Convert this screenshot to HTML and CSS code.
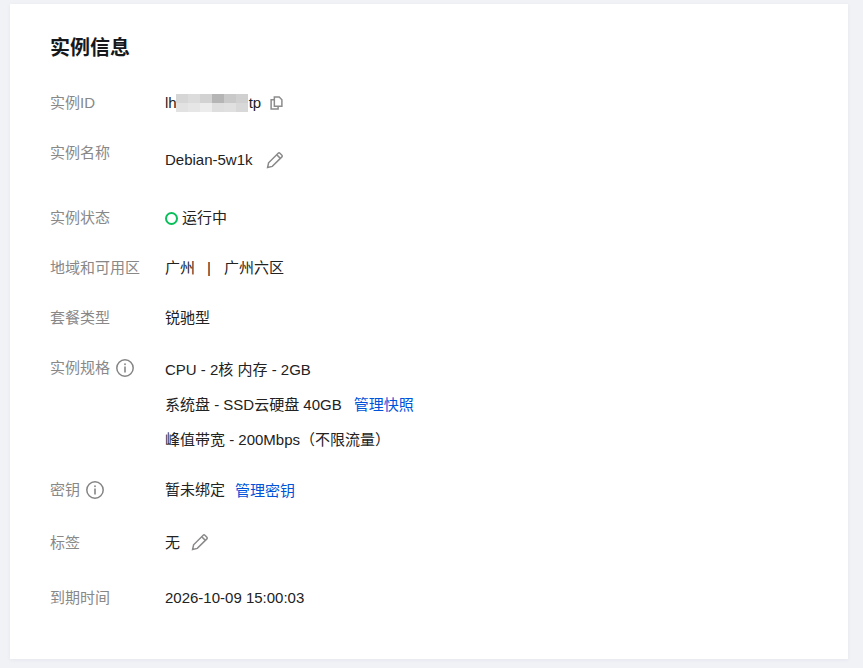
FILE: index.html
```html
<!DOCTYPE html>
<html lang="zh-CN">
<head>
<meta charset="utf-8">
<title>实例信息</title>
<link rel="stylesheet" href="styles.css">
</head>
<body>
<svg class="defs" width="0" height="0" aria-hidden="true">
  <symbol id="pencil" viewBox="0 0 18 18">
    <path d="M1.6 16.4l1-4.6L12.2 2.2a1.2 1.2 0 0 1 1.7 0l2 2a1.2 1.2 0 0 1 0 1.7L6.300 15.400z" fill="none" stroke="currentColor" stroke-width="1.500"/>
    <path d="M10.700 3.700l3.700 3.700" fill="none" stroke="currentColor" stroke-width="1.500"/>
  </symbol>
  <symbol id="info" viewBox="0 0 18 18">
    <circle cx="9" cy="9" r="8.200" fill="none" stroke="currentColor" stroke-width="1.500"/>
    <rect x="8.200" y="7.500" width="1.600" height="6" fill="currentColor"/>
    <rect x="8.200" y="4.400" width="1.600" height="1.700" fill="currentColor"/>
  </symbol>
</svg>
<main class="card">
  <h1 class="title">实例信息</h1>
  <div class="rows">
    <div class="row row-id">
      <div class="label">实例ID</div>
      <div class="value inline">
        <span>lh</span>
        <span class="mosaic" aria-hidden="true">
          <i class="c1"></i><i class="c2"></i><i class="c3"></i><i class="c4"></i><i class="c5"></i><i class="c6"></i>
          <i class="d1"></i><i class="d2"></i><i class="d3"></i><i class="d4"></i><i class="d5"></i><i class="d6"></i>
        </span>
        <span>tp</span>
        <svg class="icon-copy" width="13" height="14" viewBox="0 0 12 13">
          <path d="M4 9.500V1h4.500L11 3.500v6z" fill="none" stroke="currentColor" stroke-width="1.400"/>
          <path d="M4 3.500H1V12h6.500V9.500" fill="none" stroke="currentColor" stroke-width="1.400"/>
        </svg>
      </div>
    </div>
    <div class="row row-name">
      <div class="label">实例名称</div>
      <div class="value name-value inline">
        <span>Debian-5w1k</span>
        <svg class="icon-pencil name-pencil" width="18" height="18"><use href="#pencil"/></svg>
      </div>
    </div>
    <div class="row row-std">
      <div class="label">实例状态</div>
      <div class="value inline"><span class="status-dot"></span><span>运行中</span></div>
    </div>
    <div class="row row-std">
      <div class="label">地域和可用区</div>
      <div class="value inline"><span>广州</span><span class="sep">|</span><span>广州六区</span></div>
    </div>
    <div class="row row-std">
      <div class="label">套餐类型</div>
      <div class="value">锐驰型</div>
    </div>
    <div class="row row-spec">
      <div class="label inline">实例规格<svg class="icon-info" width="18" height="18"><use href="#info"/></svg></div>
      <div class="value lines">
        <div class="line">CPU - 2核 内存 - 2GB</div>
        <div class="line">系统盘 - SSD云硬盘 40GB<a class="link link-snap" href="#">管理快照</a></div>
        <div class="line">峰值带宽 - 200Mbps（不限流量）</div>
      </div>
    </div>
    <div class="row row-key">
      <div class="label inline">密钥<svg class="icon-info" width="18" height="18"><use href="#info"/></svg></div>
      <div class="value">暂未绑定<a class="link link-key" href="#">管理密钥</a></div>
    </div>
    <div class="row row-tag">
      <div class="label">标签</div>
      <div class="value inline"><span>无</span><svg class="icon-pencil tag-pencil" width="18" height="18"><use href="#pencil"/></svg></div>
    </div>
    <div class="row row-std">
      <div class="label">到期时间</div>
      <div class="value">2026-10-09 15:00:03</div>
    </div>
  </div>
</main>
</body>
</html>
```
FILE: styles.css
```css
* { box-sizing: border-box; }
html, body { height: 100%; }
body {
  margin: 0;
  padding: 4px 15px 9px 10px;
  background: #f1f2f6;
  font-family: "Liberation Sans", "Noto Sans CJK SC", sans-serif;
  font-size: 15px;
  line-height: 20px;
  color: #222;
  overflow: hidden;
}
.defs { position: absolute; }
.card {
  height: 655px;
  background: #fff;
  padding: 30px 40px 0;
  box-shadow: 0 1px 4px rgba(54, 58, 80, 0.06);
}
.title {
  margin: 0;
  font-size: 20px;
  line-height: 28px;
  font-weight: 700;
  color: #16181c;
}
.rows { margin-top: 31px; }
.row { display: flex; align-items: flex-start; }
.label { width: 115px; flex: none; color: #888; }
.value { flex: 1; min-width: 0; }
.inline { display: flex; align-items: center; }
.row-id { height: 50px; }
.row-name { height: 65px; }
.row-std { height: 50px; }
.row-spec { height: 122px; }
.row-key { height: 53px; }
.row-tag { height: 55px; }
.name-value { margin-top: 7px; }
.mosaic {
  display: grid;
  grid-template-columns: repeat(6, 12px);
  grid-template-rows: 9px 9px;
  width: 72px;
  height: 18px;
  margin: 0 1px 0 -1px;
}
.c1 { background: #d6d6d6; }
.c2 { background: #dcdcdc; }
.c3 { background: #d2d2d2; }
.c4 { background: #b5b5b5; }
.c5 { background: #c9c9c9; }
.c6 { background: #d0d0d0; }
.d1 { background: #e2e2e2; }
.d2 { background: #e6e6e6; }
.d3 { background: #ececec; }
.d4 { background: #dedede; }
.d5 { background: #e0e0e0; }
.d6 { background: #d8d8d8; }
.icon-copy { color: #8c8c8c; margin-left: 9px; }
.icon-pencil { color: #8a8a8a; }
.name-pencil { margin-left: 13px; }
.tag-pencil { margin-left: 11px; margin-top: -2px; }
.icon-info { color: #858585; margin-left: 6px; }
.status-dot {
  width: 13px;
  height: 13px;
  margin-right: 4px;
  border: 2px solid #0abf5b;
  border-radius: 50%;
}
.sep { margin: 0 13px 0 12px; }
.line { height: 35px; display: flex; align-items: flex-start; }
.lines { margin-top: 2px; }
.link { color: #0052d9; text-decoration: none; }
.link-snap { margin-left: 12px; }
.link-key { margin-left: 10px; margin-top: 1px; }
.row-key .value { display: flex; }
```
